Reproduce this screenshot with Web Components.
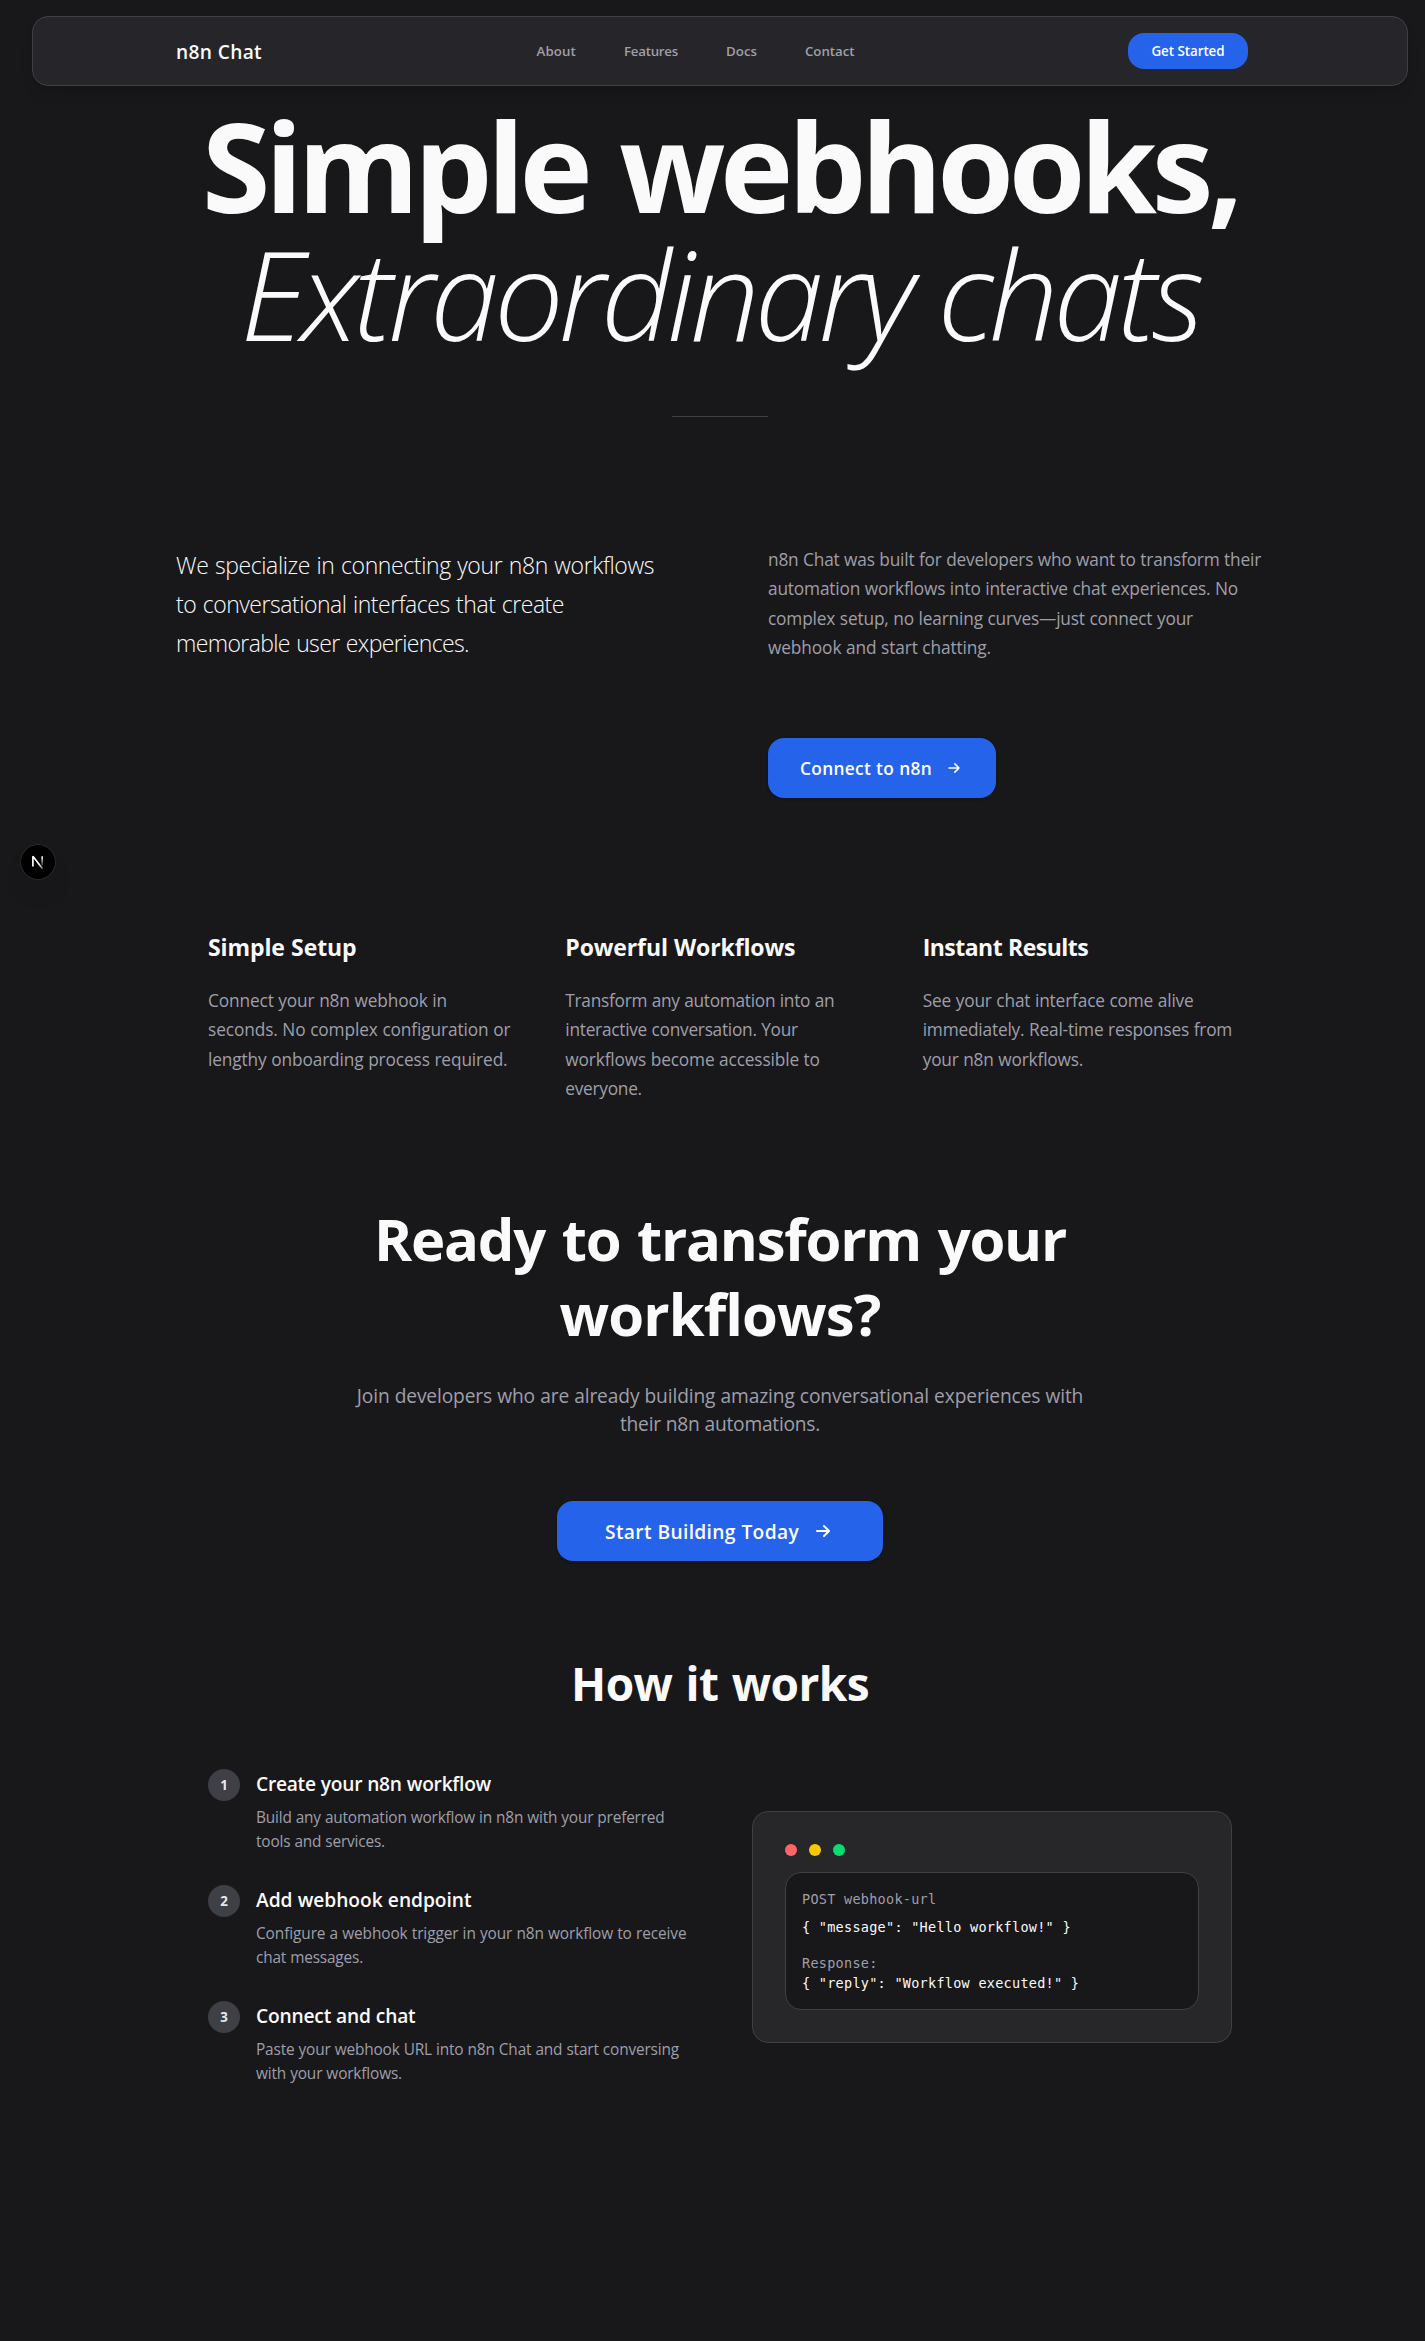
<!DOCTYPE html>
<html lang="en">
<head>
<meta charset="utf-8">
<title>n8n Chat</title>
<style>
html{background:#18181b;overflow:hidden}
body{margin:0;width:1440px;height:2341px;position:relative;background:#18181b;color:#fafafa;font-family:"Open Sans","Noto Sans",sans-serif;--muted:#9f9fa9;--line:#3f3f46;--blue:#2563eb}
</style>
</head>
<body>
<chat-page></chat-page>
<script>
const define = (name, html, ready) => customElements.define(name, class extends HTMLElement {
  connectedCallback() {
    if (this.shadowRoot) return;
    const t = document.createElement('template');
    t.innerHTML = typeof html === 'function' ? html(this) : html;
    this.attachShadow({mode: 'open'}).append(t.content.cloneNode(true));
    if (ready) ready(this);
  }
});

/* One line of text, tracked so that its advance equals the w attribute. */
define('text-line', `<style>:host{display:block;white-space:pre;word-spacing:var(--gap,.015em)}span{display:inline-block}</style><span><slot></slot></span>`, el => {
  const span = el.shadowRoot.querySelector('span');
  const w = parseFloat(el.getAttribute('w'));
  const n = el.textContent.length;
  el.style.letterSpacing = '0px';
  const natural = span.getBoundingClientRect().width;
  if (w && natural) el.style.letterSpacing = ((w - natural) / n).toFixed(4) + 'px';
});

define('arrow-icon', `<style>:host{display:block;width:var(--icon,20px);height:var(--icon,20px)}svg{display:block;width:100%;height:100%}</style>
<svg viewBox="0 0 24 24" fill="none" stroke="currentColor" stroke-width="2" stroke-linecap="round" stroke-linejoin="round"><path d="M13 7l5 5m0 0l-5 5m5-5H6"/></svg>`);

define('action-button', `<style>
:host{display:flex;box-sizing:border-box;width:max-content;height:60px;padding:0 32px;gap:12px;align-items:center;border-radius:16px;background:var(--blue);color:#fff;font-weight:600;font-size:17.3px;line-height:28px;box-shadow:0 1px 3px rgba(0,0,0,.1),0 1px 2px rgba(0,0,0,.1)}
:host([large]){padding:0 48px;font-size:19.2px;--icon:24px}
::slotted(text-line){padding-top:2px}
</style><slot></slot><arrow-icon></arrow-icon>`);

define('site-nav', `<style>
:host{display:flex;box-sizing:border-box;margin:0 32px;height:70px;border:1px solid var(--line);border-radius:16px;background:#26262a;padding:0 159px 0 143px;align-items:center;justify-content:space-between;box-shadow:0 10px 15px -3px rgba(0,0,0,.1),0 4px 6px -4px rgba(0,0,0,.1)}
.logo{font-weight:600;font-size:19.2px;line-height:28px;padding-top:2px;width:86px}
nav{display:flex;gap:48px;font-weight:600;font-size:13.3px;line-height:20px;color:var(--muted);margin-left:1px;padding-bottom:1px}
.cta{box-sizing:border-box;width:120px;height:36px;border-radius:16px;background:var(--blue);color:#fff;display:flex;align-items:center;justify-content:center;font-weight:600;font-size:13.4px;line-height:20px}
</style>
<text-line class="logo" w="86">n8n Chat</text-line>
<nav><text-line w="39.5">About</text-line><text-line w="54">Features</text-line><text-line w="31">Docs</text-line><text-line w="49.5">Contact</text-line></nav>
<div class="cta"><text-line w="73">Get Started</text-line></div>`);

define('hero-title', `<style>
:host{display:flex;flex-direction:column;align-items:center;padding-top:15px}
h1{margin:0;font-size:124px;line-height:128px;font-weight:700;display:flex;flex-direction:column;align-items:center;--gap:.04em}
.em{font-style:italic;font-weight:300;--gap:.01em}
.rule{width:96px;height:1px;background:var(--line);margin-top:59px}
</style><h1><text-line w="1036">Simple webhooks,</text-line><text-line class="em" w="959">Extraordinary chats</text-line></h1><div class="rule"></div>`);

define('intro-section', `<style>
:host{display:grid;grid-template-columns:496px 496px;column-gap:96px;padding:128px 176px 0}
.lead{font-weight:300;font-size:23px;line-height:39px;padding-top:1px;--gap:.04em}
.body{font-size:17.3px;line-height:29.25px;color:var(--muted);height:193px}
</style>
<div class="lead"><text-line w="478">We specialize in connecting your n8n workflows</text-line><text-line w="388">to conversational interfaces that create</text-line><text-line w="293">memorable user experiences.</text-line></div>
<div><div class="body"><text-line w="493">n8n Chat was built for developers who want to transform their</text-line><text-line w="470">automation workflows into interactive chat experiences. No</text-line><text-line w="425">complex setup, no learning curves—just connect your</text-line><text-line w="223">webhook and start chatting.</text-line></div>
<action-button><text-line w="132">Connect to n8n</text-line></action-button></div>`);

define('feature-card', `<style>
:host{display:flex;flex-direction:column;gap:23px}
.head{font-weight:700;font-size:23px;line-height:32px}
.text{font-size:17.3px;line-height:29.25px;color:var(--muted)}
</style><div class="head"><slot name="head"></slot></div><div class="text"><slot></slot></div>`);

define('feature-grid', `<style>:host{display:grid;grid-template-columns:repeat(3,309.33px);column-gap:48px;padding:133px 208px 0;height:171px}</style>
<feature-card><text-line slot="head" w="148.5">Simple Setup</text-line><text-line w="239">Connect your n8n webhook in</text-line><text-line w="302.5">seconds. No complex configuration or</text-line><text-line w="299.5">lengthy onboarding process required.</text-line></feature-card>
<feature-card><text-line slot="head" w="230">Powerful Workflows</text-line><text-line w="269">Transform any automation into an</text-line><text-line w="232.5">interactive conversation. Your</text-line><text-line w="254.5">workflows become accessible to</text-line><text-line w="76.5">everyone.</text-line></feature-card>
<feature-card><text-line slot="head" w="165.5">Instant Results</text-line><text-line w="271">See your chat interface come alive</text-line><text-line w="309.5">immediately. Real-time responses from</text-line><text-line w="160.5">your n8n workflows.</text-line></feature-card>`);

define('cta-section', `<style>
:host{display:flex;flex-direction:column;align-items:center;text-align:center;padding-top:99px}
h2{margin:0;font-weight:700;font-size:58px;line-height:75px;--gap:.05em}
.sub{margin:31px 0 63px;font-size:19.2px;line-height:28px;color:var(--muted)}
</style>
<h2><text-line w="692">Ready to transform your</text-line><text-line w="321">workflows?</text-line></h2>
<div class="sub"><text-line w="726.5">Join developers who are already building amazing conversational experiences with</text-line><text-line w="200">their n8n automations.</text-line></div>
<action-button large><text-line w="194">Start Building Today</text-line></action-button>`);

define('step-item', el => `<style>
:host{display:flex;gap:16px;height:84px}
.num{width:32px;height:32px;flex:none;border-radius:50%;background:var(--line);color:#e8e8ea;font-weight:700;font-size:13.3px;line-height:32px;text-align:center}
.copy{padding-top:1px}
.title{font-weight:600;font-size:19.2px;line-height:28px;margin-bottom:8px}
.text{font-size:15.4px;line-height:24px;color:var(--muted)}
</style><div class="num">${el.getAttribute('n')}</div><div class="copy"><div class="title"><slot name="title"></slot></div><div class="text"><slot></slot></div></div>`);

define('code-window', `<style>
:host{display:block;box-sizing:border-box;width:480px;height:232px;padding:32px;border:1px solid var(--line);border-radius:16px;background:#27272a}
.dots{display:flex;gap:12px;margin-bottom:16px}
i{width:12px;height:12px;border-radius:50%;background:#ff6467}i+i{background:#fdc700}i+i+i{background:#05df72}
.code{box-sizing:border-box;height:138px;padding:16px;border:1px solid var(--line);border-radius:16px;background:#18181b;font-family:"DejaVu Sans Mono","Liberation Mono",monospace;font-size:13.5px;line-height:20px;color:#fafafa;--gap:0}
.dim{color:var(--muted)}.a{margin-bottom:8px}.b{margin-bottom:16px}
</style><div class="dots"><i></i><i></i><i></i></div>
<div class="code"><text-line class="dim a" w="134.4">POST webhook-url</text-line><text-line class="b" w="268.8">{ "message": "Hello workflow!" }</text-line><text-line class="dim" w="75.6">Response:</text-line><text-line w="277.2">{ "reply": "Workflow executed!" }</text-line></div>`);

define('how-section', `<style>
:host{display:flex;flex-direction:column;align-items:center;padding-top:92px}
h2{margin:0 0 56px;font-weight:700;font-size:46px;line-height:60px;--gap:.04em}
.row{display:flex;width:1024px;justify-content:space-between;align-items:center}
.steps{display:flex;flex-direction:column;gap:32px}
</style><h2><text-line w="298">How it works</text-line></h2>
<div class="row"><div class="steps">
<step-item n="1"><text-line slot="title" w="235">Create your n8n workflow</text-line><text-line w="408.5">Build any automation workflow in n8n with your preferred</text-line><text-line w="129">tools and services.</text-line></step-item>
<step-item n="2"><text-line slot="title" w="215.5">Add webhook endpoint</text-line><text-line w="430.5">Configure a webhook trigger in your n8n workflow to receive</text-line><text-line w="107">chat messages.</text-line></step-item>
<step-item n="3"><text-line slot="title" w="159.5">Connect and chat</text-line><text-line w="423">Paste your webhook URL into n8n Chat and start conversing</text-line><text-line w="146">with your workflows.</text-line></step-item>
</div><code-window></code-window></div>`);

define('dev-badge', `<style>
:host{position:absolute;left:20px;top:844px;width:36px;height:36px;border-radius:50%;background:#000;box-shadow:inset 0 0 0 1px #2b2b2d,0 16px 32px -8px rgba(0,0,0,.12)}
svg{display:block}
</style><svg width="36" height="36" viewBox="0 0 40 40" fill="none"><defs>
<linearGradient id="a" x1="9.9" y1="9.4" x2="14.6" y2="15.9" gradientUnits="userSpaceOnUse"><stop stop-color="#fff"/><stop offset=".65" stop-color="#fff" stop-opacity=".5"/><stop offset="1" stop-color="#fff" stop-opacity="0"/></linearGradient>
<linearGradient id="b" x1="0" y1="1.5" x2="0" y2="13" gradientUnits="userSpaceOnUse"><stop stop-color="#fff"/><stop offset="1" stop-color="#fff" stop-opacity="0"/></linearGradient></defs>
<g transform="translate(12 12.5)" stroke-width="1.86"><path d="M13.3 15.2 2.34 1v11.6" stroke="url(#a)" stroke-linejoin="bevel"/><path d="M11.7 1.2h1.86v11.6H11.7z" fill="url(#b)"/></g></svg>`);

define('chat-page', `<style>:host{display:flow-root;padding-top:16px}</style>
<site-nav></site-nav><hero-title></hero-title><intro-section></intro-section><feature-grid></feature-grid><cta-section></cta-section><how-section></how-section><dev-badge></dev-badge>`);
</script>
</body>
</html>
